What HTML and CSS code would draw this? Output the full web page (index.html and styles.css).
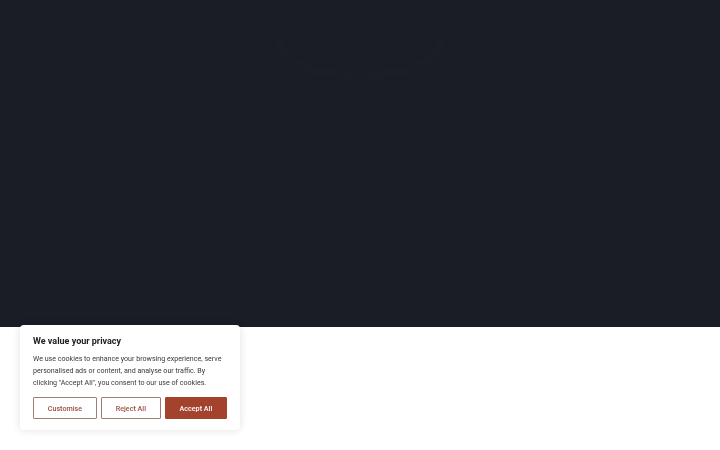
FILE: index.html
```html
<!DOCTYPE html>
<html lang="en">
<head>
<meta charset="utf-8">
<title>Cookie consent</title>
<link rel="stylesheet" href="styles.css">
</head>
<body>
<header class="hero">
  <svg class="hero-mark" width="200" height="90" viewBox="0 0 200 90" aria-hidden="true">
    <path d="M18 8 L18 40 Q24 62 60 72 L100 77 L140 72 Q176 62 182 40 L182 8" fill="none" stroke="#1c1f27" stroke-width="5"/>
  </svg>
</header>
<main class="page"></main>
<section class="cookie-banner">
  <h2 class="cookie-title">We value your privacy</h2>
  <p class="cookie-text">We use cookies to enhance your browsing experience, serve personalised ads or content, and analyse our traffic. By clicking "Accept All", you consent to our use of cookies.</p>
  <div class="cookie-actions">
    <button class="btn btn-outline">Customise</button>
    <button class="btn btn-outline">Reject All</button>
    <button class="btn btn-solid">Accept All</button>
  </div>
</section>
</body>
</html>
```
FILE: styles.css
```css
html, body {
  margin: 0;
  padding: 0;
  background: #ffffff;
  font-family: Roboto, "Liberation Sans", sans-serif;
}
.hero {
  height: 327px;
  background: #1a1d25;
  display: flex;
  justify-content: center;
}
.hero-mark {
  display: block;
  filter: blur(2.5px);
}
.cookie-banner {
  position: fixed;
  left: 20px;
  top: 325px;
  width: 194px;
  padding: 10px 13px 11px 13px;
  background: #ffffff;
  border-radius: 4px;
  box-shadow: 0 0 8px rgba(0, 0, 0, 0.12);
}
.cookie-title {
  margin: 0 0 6px 0;
  font-size: 9px;
  line-height: 12px;
  font-weight: 700;
  color: #212121;
}
.cookie-text {
  margin: 0 0 8px 0;
  font-size: 7.1px;
  line-height: 12px;
  color: #3a3a3a;
}
.cookie-actions {
  display: flex;
  gap: 4px;
}
.btn {
  flex: 1 1 auto;
  height: 22px;
  padding: 0 8px;
  font-family: Roboto, "Liberation Sans", sans-serif;
  font-size: 7.2px;
  font-weight: 500;
  border-radius: 1px;
  cursor: pointer;
}
.btn-outline {
  background: #ffffff;
  color: #9e5040;
  border: 1.2px solid #a27b73;
}
.btn-solid {
  background: #a3432e;
  color: #ffffff;
  border: 1.2px solid #a3432e;
}
```
